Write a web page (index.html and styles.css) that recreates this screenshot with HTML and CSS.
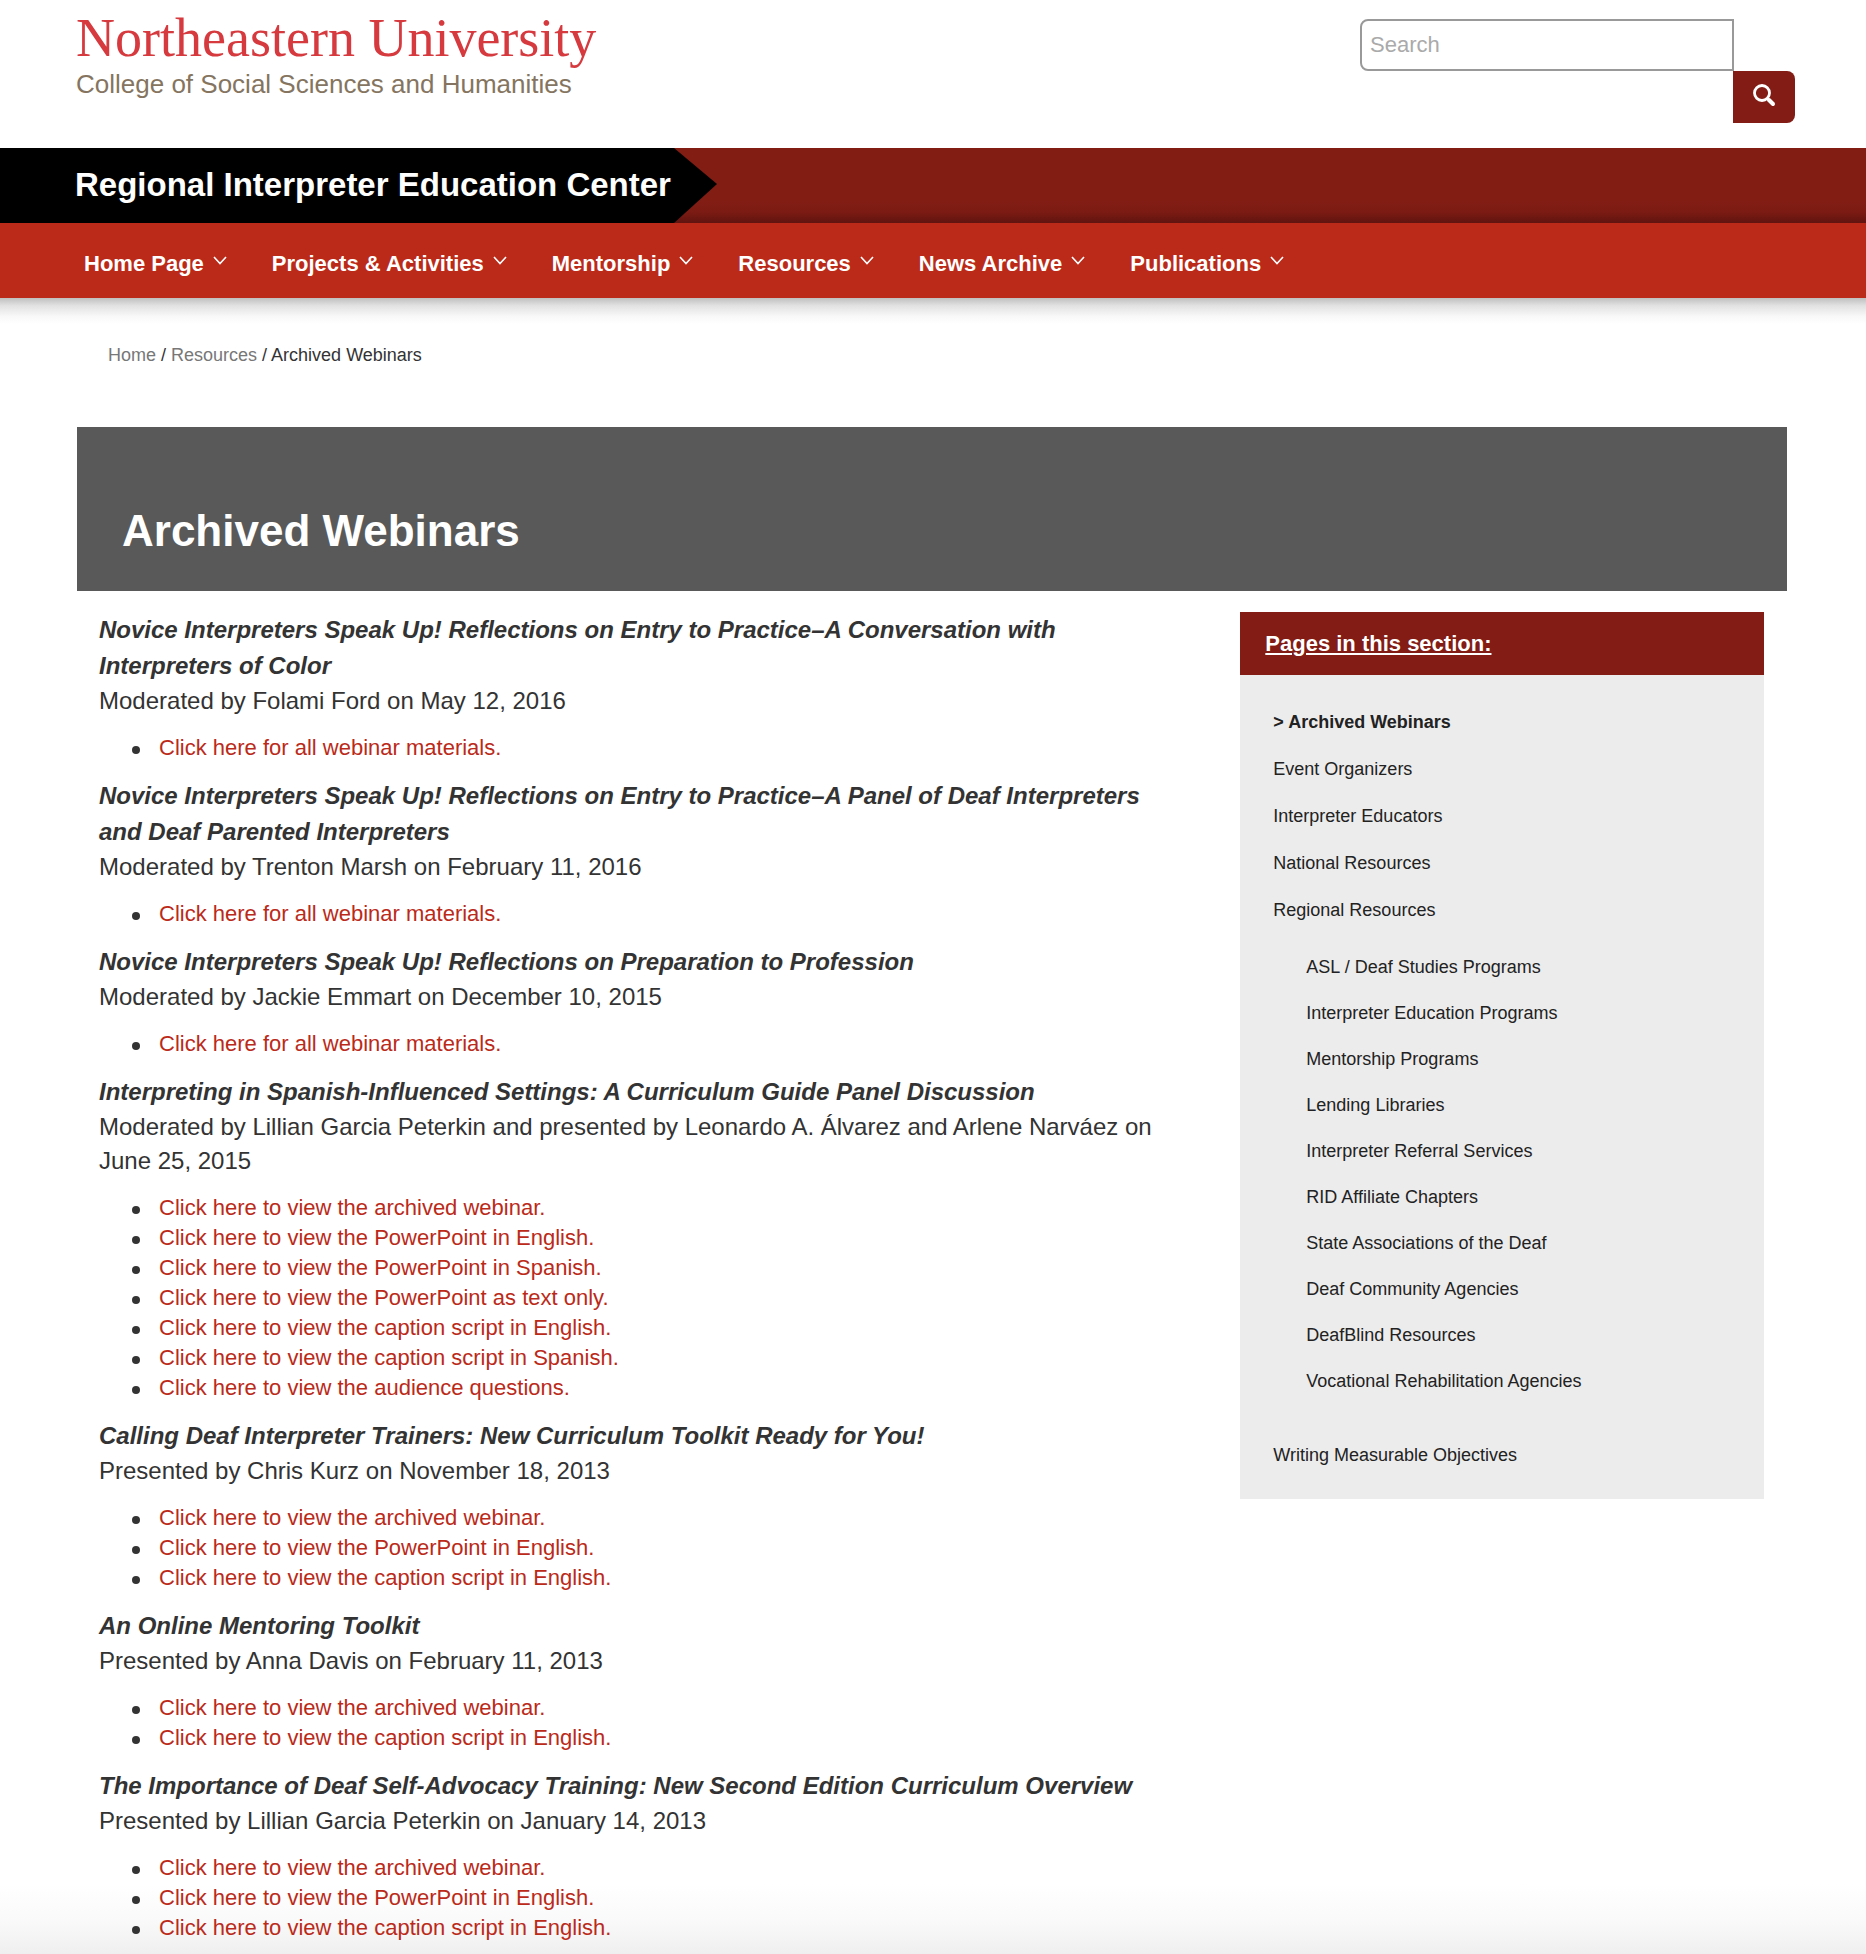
FILE: index.html
```html
<!DOCTYPE html>
<html lang="en">
<head>
<meta charset="utf-8">
<meta name="viewport" content="width=device-width, initial-scale=1">
<title>Archived Webinars | Regional Interpreter Education Center</title>
<link rel="stylesheet" href="styles.css">
</head>
<body>
<header>
  <div class="masthead">
    <a class="logo" href="#">
      <span class="logo-name">Northeastern University</span>
      <span class="logo-college">College of Social Sciences and Humanities</span>
    </a>
    <form class="search" role="search">
      <input class="search-input" type="search" placeholder="Search" aria-label="Search">
      <button class="search-button" type="button" aria-label="Submit search">
        <svg width="24" height="24" viewBox="0 0 24 24" fill="none" stroke="#fff" aria-hidden="true"><circle cx="10" cy="10" r="7.5" stroke-width="2.8"/><path d="M15.5 15.5L16.5 16.5" stroke-width="3"/><path d="M17 17L21 21" stroke-width="4" stroke-linecap="round"/></svg>
      </button>
    </form>
  </div>
  <div class="site-bar">
    <a class="site-name" href="#">Regional Interpreter Education Center</a>
    <svg class="site-arrow" viewBox="0 0 43 75" preserveAspectRatio="none" aria-hidden="true"><path d="M0 0L43 36L0 75Z"/></svg>
  </div>
  <nav class="main-nav" aria-label="Main">
    <a href="#">Home Page<svg class="chevron" viewBox="0 0 14 10" aria-hidden="true"><path d="M1 1L7 7.5L13 1"/></svg></a>
    <a href="#">Projects &amp; Activities<svg class="chevron" viewBox="0 0 14 10" aria-hidden="true"><path d="M1 1L7 7.5L13 1"/></svg></a>
    <a href="#">Mentorship<svg class="chevron" viewBox="0 0 14 10" aria-hidden="true"><path d="M1 1L7 7.5L13 1"/></svg></a>
    <a href="#">Resources<svg class="chevron" viewBox="0 0 14 10" aria-hidden="true"><path d="M1 1L7 7.5L13 1"/></svg></a>
    <a href="#">News Archive<svg class="chevron" viewBox="0 0 14 10" aria-hidden="true"><path d="M1 1L7 7.5L13 1"/></svg></a>
    <a href="#">Publications<svg class="chevron" viewBox="0 0 14 10" aria-hidden="true"><path d="M1 1L7 7.5L13 1"/></svg></a>
  </nav>
</header>
<div class="page">
  <nav class="breadcrumb" aria-label="Breadcrumb"><a href="#">Home</a> / <a href="#">Resources</a> / <span>Archived Webinars</span></nav>
  <div class="hero"><h1>Archived Webinars</h1></div>
  <div class="columns">
    <main class="webinars">
      <section>
        <h2>Novice Interpreters Speak Up! Reflections on Entry to Practice–A Conversation with Interpreters of Color</h2>
        <p>Moderated by Folami Ford on May 12, 2016</p>
        <ul>
          <li><a href="#">Click here for all webinar materials.</a></li>
        </ul>
      </section>
      <section>
        <h2>Novice Interpreters Speak Up! Reflections on Entry to Practice–A Panel of Deaf Interpreters and Deaf Parented Interpreters</h2>
        <p>Moderated by Trenton Marsh on February 11, 2016</p>
        <ul>
          <li><a href="#">Click here for all webinar materials.</a></li>
        </ul>
      </section>
      <section>
        <h2>Novice Interpreters Speak Up! Reflections on Preparation to Profession</h2>
        <p>Moderated by Jackie Emmart on December 10, 2015</p>
        <ul>
          <li><a href="#">Click here for all webinar materials.</a></li>
        </ul>
      </section>
      <section>
        <h2>Interpreting in Spanish-Influenced Settings: A Curriculum Guide Panel Discussion</h2>
        <p>Moderated by Lillian Garcia Peterkin and presented by Leonardo A. Álvarez and Arlene Narváez on June 25, 2015</p>
        <ul>
          <li><a href="#">Click here to view the archived webinar.</a></li>
          <li><a href="#">Click here to view the PowerPoint in English.</a></li>
          <li><a href="#">Click here to view the PowerPoint in Spanish.</a></li>
          <li><a href="#">Click here to view the PowerPoint as text only.</a></li>
          <li><a href="#">Click here to view the caption script in English.</a></li>
          <li><a href="#">Click here to view the caption script in Spanish.</a></li>
          <li><a href="#">Click here to view the audience questions.</a></li>
        </ul>
      </section>
      <section>
        <h2>Calling Deaf Interpreter Trainers: New Curriculum Toolkit Ready for You!</h2>
        <p>Presented by Chris Kurz on November 18, 2013</p>
        <ul>
          <li><a href="#">Click here to view the archived webinar.</a></li>
          <li><a href="#">Click here to view the PowerPoint in English.</a></li>
          <li><a href="#">Click here to view the caption script in English.</a></li>
        </ul>
      </section>
      <section>
        <h2>An Online Mentoring Toolkit</h2>
        <p>Presented by Anna Davis on February 11, 2013</p>
        <ul>
          <li><a href="#">Click here to view the archived webinar.</a></li>
          <li><a href="#">Click here to view the caption script in English.</a></li>
        </ul>
      </section>
      <section>
        <h2>The Importance of Deaf Self-Advocacy Training: New Second Edition Curriculum Overview</h2>
        <p>Presented by Lillian Garcia Peterkin on January 14, 2013</p>
        <ul>
          <li><a href="#">Click here to view the archived webinar.</a></li>
          <li><a href="#">Click here to view the PowerPoint in English.</a></li>
          <li><a href="#">Click here to view the caption script in English.</a></li>
        </ul>
      </section>
    </main>
    <aside class="section-nav">
      <h2><a href="#">Pages in this section:</a></h2>
      <ul class="section-list">
        <li><a class="current" href="#" aria-current="page">&gt; Archived Webinars</a></li>
        <li><a href="#">Event Organizers</a></li>
        <li><a href="#">Interpreter Educators</a></li>
        <li><a href="#">National Resources</a></li>
        <li><a href="#">Regional Resources</a>
          <ul class="sub-list">
            <li><a href="#">ASL / Deaf Studies Programs</a></li>
            <li><a href="#">Interpreter Education Programs</a></li>
            <li><a href="#">Mentorship Programs</a></li>
            <li><a href="#">Lending Libraries</a></li>
            <li><a href="#">Interpreter Referral Services</a></li>
            <li><a href="#">RID Affiliate Chapters</a></li>
            <li><a href="#">State Associations of the Deaf</a></li>
            <li><a href="#">Deaf Community Agencies</a></li>
            <li><a href="#">DeafBlind Resources</a></li>
            <li><a href="#">Vocational Rehabilitation Agencies</a></li>
          </ul>
        </li>
        <li><a href="#">Writing Measurable Objectives</a></li>
      </ul>
    </aside>
  </div>
</div>
</body>
</html>
```
FILE: styles.css
```css
* { box-sizing: border-box; }

body {
  margin: 0;
  background: #fff;
  color: #333;
  font-family: "Liberation Sans", Arial, sans-serif;
}

a { color: inherit; text-decoration: none; }
h1, h2, p, ul { margin: 0; padding: 0; }
ul { list-style: none; }

/* Masthead */
.masthead {
  display: flex;
  justify-content: space-between;
  align-items: flex-start;
  padding: 10px 71px 25px 76px;
}

.logo { display: flex; flex-direction: column; }

.logo-name {
  color: #d6393e;
  font-family: "Liberation Serif", "Times New Roman", serif;
  font-size: 54px;
  line-height: 56px;
}

.logo-college {
  color: #857560;
  font-size: 26px;
  line-height: 36px;
}

.search {
  display: flex;
  flex-direction: column;
  padding-top: 9px;
}

.search-input {
  width: 374px;
  height: 52px;
  margin: 0;
  padding: 0 8px;
  border: 2px solid #999;
  border-radius: 8px 0 0 8px;
  background: #fff;
  color: #333;
  font: inherit;
  font-size: 22px;
  appearance: none;
}

.search-input::placeholder { color: #aaa; }

.search-button {
  display: flex;
  align-items: center;
  justify-content: center;
  width: 62px;
  height: 52px;
  margin-left: 373px;
  padding: 0 0 4px;
  border: 0;
  border-radius: 0 8px 8px 0;
  background: #821c14;
}

/* Site name bar */
.site-bar {
  display: flex;
  height: 75px;
  background: linear-gradient(#821d14 70%, #7c1b13 85%, #601410);
}

.site-name {
  padding: 0 3px 0 75px;
  background: #000;
  color: #fff;
  font-size: 33px;
  font-weight: 700;
  line-height: 73px;
}

.site-arrow { width: 43px; height: 75px; }

/* Main navigation */
.main-nav {
  display: flex;
  gap: 45px;
  padding: 7px 84px 0;
  background: #bb2a19;
  color: #fff;
  font-size: 22px;
  font-weight: 700;
  line-height: 68px;
}

.main-nav a { display: flex; align-items: center; gap: 9px; }

.chevron {
  width: 14px;
  height: 10px;
  margin-bottom: 6px;
  fill: none;
  stroke: #fff;
  stroke-width: 1.6;
}

/* Page body: shadow below the navigation, soft fade at the foot */
.page {
  padding: 44px 79px 11px 77px;
  background:
    linear-gradient(#bfbfbf, #e2e2e2 30%, #f8f8f8 70%, #fff) top / 100% 26px no-repeat,
    linear-gradient(#fff, #fafafa 50%, #efefef) bottom / 100% 70px no-repeat;
}

.breadcrumb {
  padding: 0 31px;
  font-size: 18px;
  line-height: 26px;
}

.breadcrumb a { color: #777; }

.hero {
  margin-top: 59px;
  padding: 72px 45px 28px;
  background: #595959;
  color: #fff;
}

.hero h1 {
  font-size: 44px;
  line-height: 64px;
}

.columns {
  display: grid;
  grid-template-columns: minmax(0, 43fr) minmax(0, 21fr);
  align-items: start;
  gap: 69px;
  padding: 21px 23px 0 22px;
}

.webinars { display: grid; gap: 15px; }

.webinars h2 {
  font-size: 24px;
  font-style: italic;
  line-height: 36px;
}

.webinars p { font-size: 24px; line-height: 34px; }

.webinars ul { padding: 15px 0 0 33px; }

.webinars li {
  display: flex;
  align-items: center;
  gap: 19px;
  color: #bb2a19;
  font-size: 22px;
  line-height: 30px;
}

.webinars li::before {
  content: "";
  width: 8px;
  height: 8px;
  margin-top: 3px;
  border-radius: 50%;
  background: #333;
}

/* Section navigation */
.section-nav { background: #ececec; }

.section-nav h2 {
  padding: 0 25px;
  background: #821c14;
  color: #fff;
  font-size: 22px;
  line-height: 63px;
}

.section-nav h2 a { text-decoration: underline; }

.section-list {
  padding: 24px 33px 20px;
  color: #222;
  font-size: 18px;
  line-height: 47px;
}

.current { font-weight: 700; }

.sub-list {
  padding: 10px 0 28px 33px;
  line-height: 46px;
}
```
